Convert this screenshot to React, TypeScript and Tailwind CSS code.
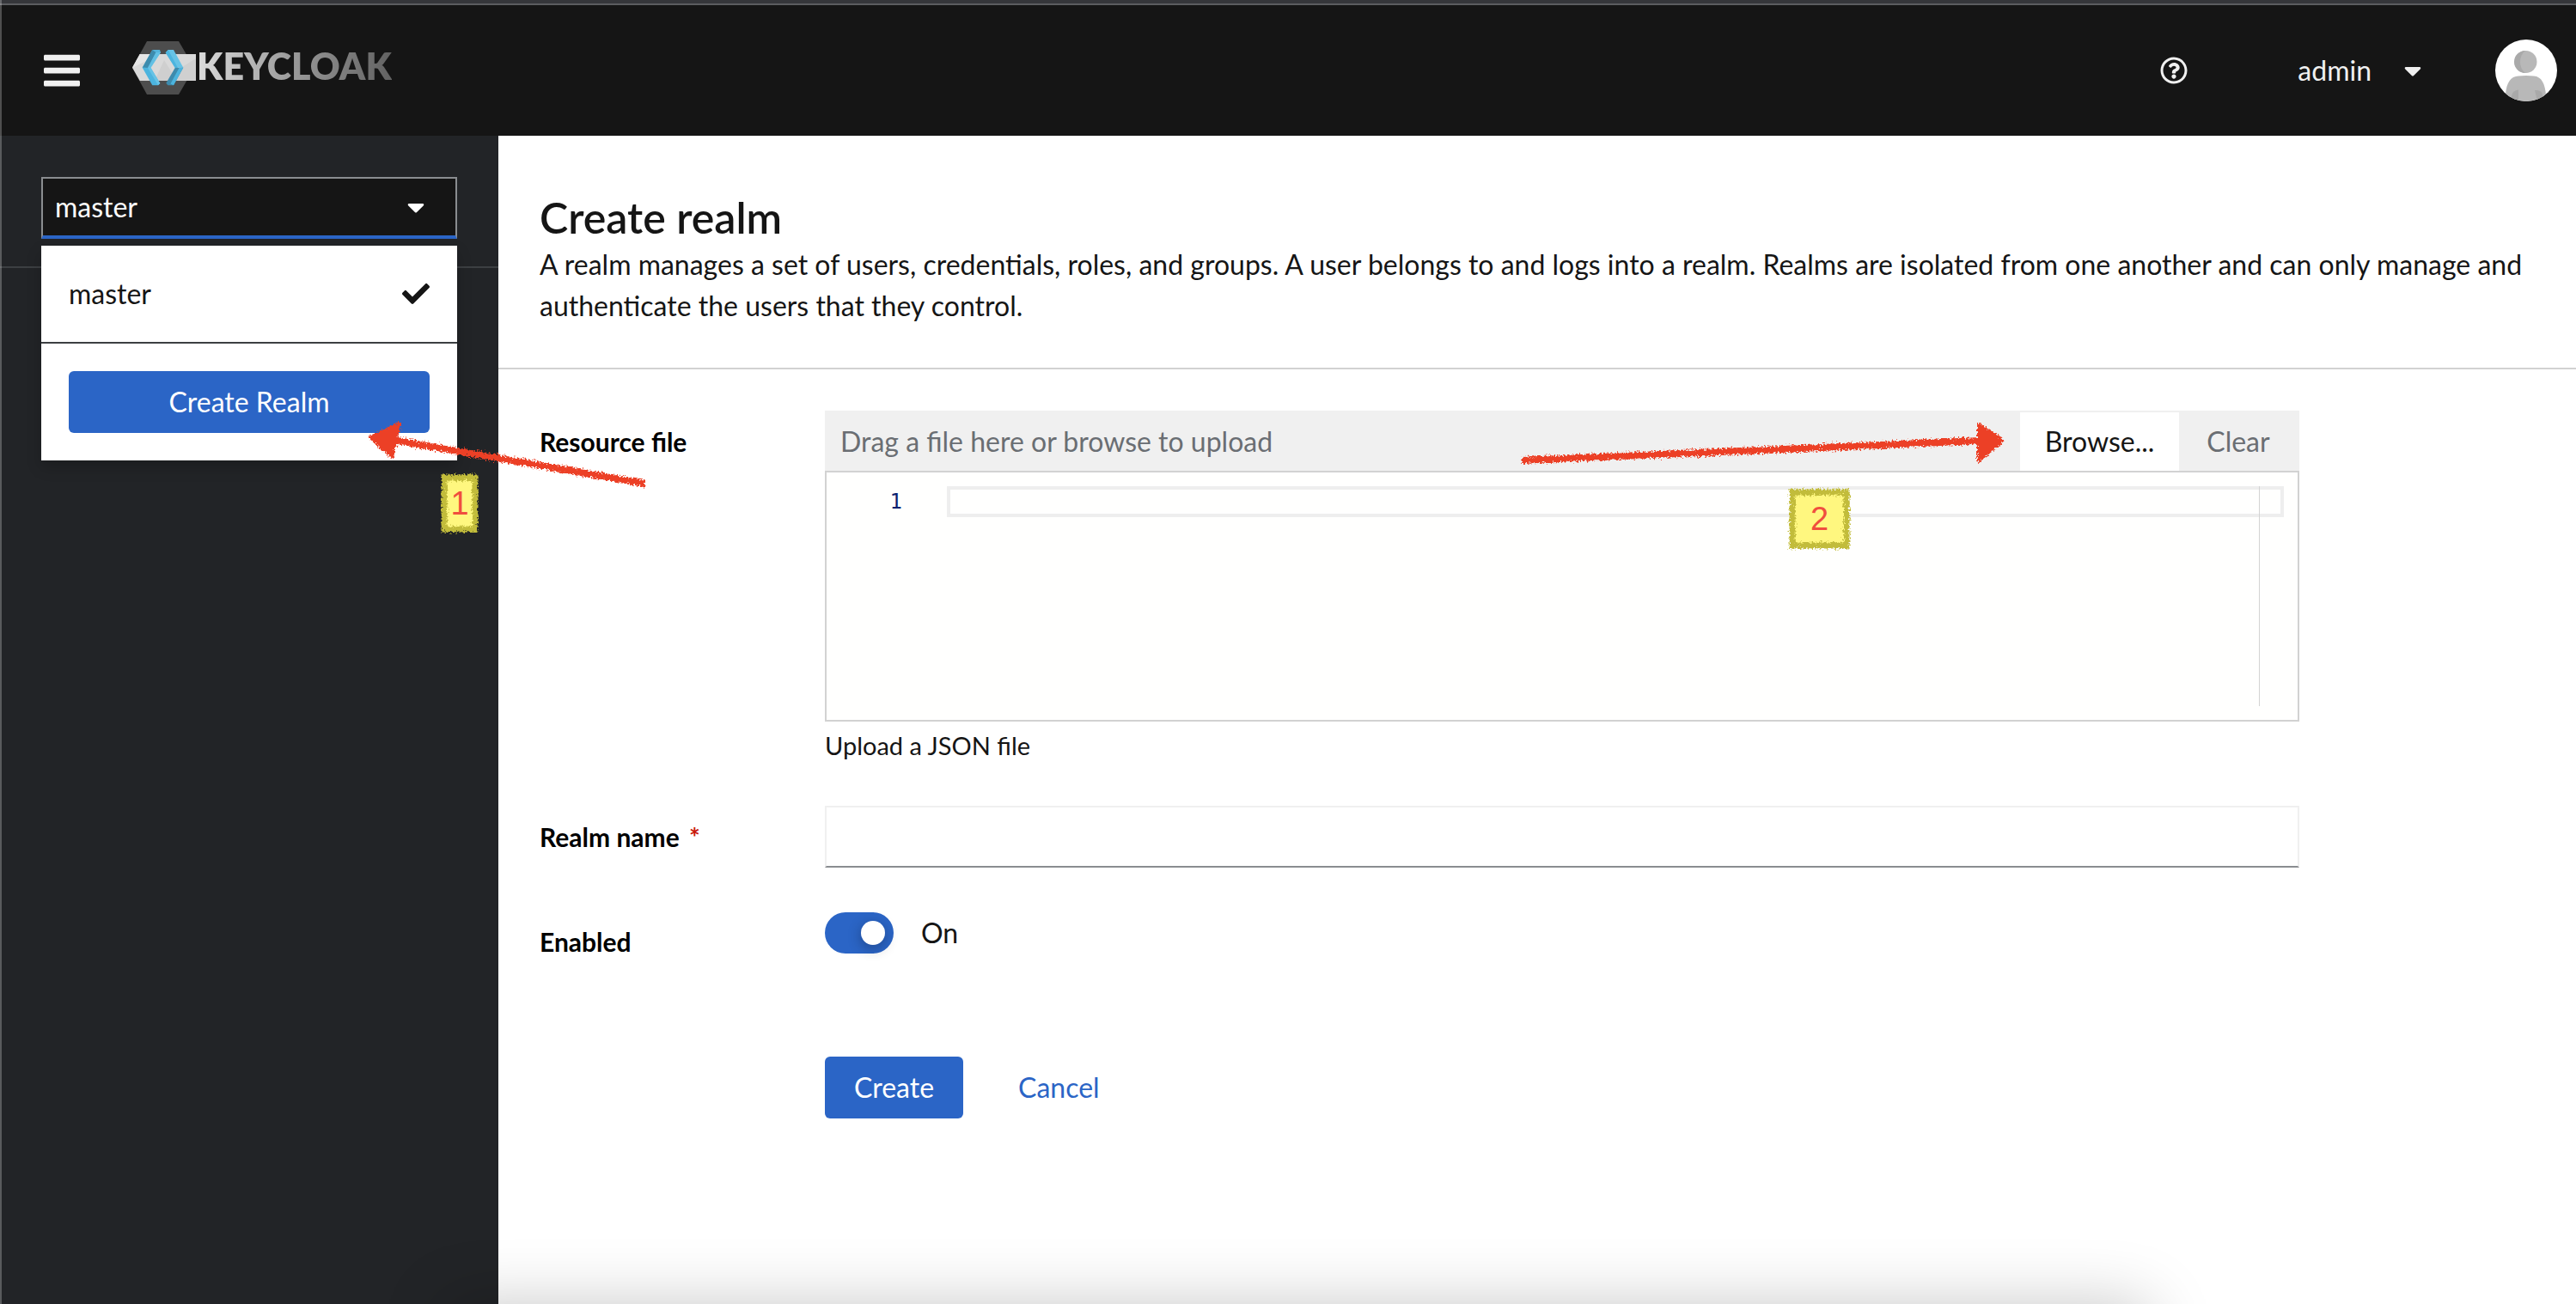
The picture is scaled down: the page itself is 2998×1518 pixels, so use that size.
import { FaBars, FaCaretDown, FaCheck, FaRegQuestionCircle } from "react-icons/fa";

function Logo() {
  return (
    <a href="#" aria-label="Keycloak" className="mb-1.5 ml-[58px] flex items-start gap-px">
      <svg width="74" height="62" viewBox="0 0 74 62" aria-hidden="true">
        <path d="M17 0H54L72 31L54 62H17L0 31Z" fill="#4d4d4d" />
        <path d="M8.7 15H74V46H8.7L0 30.7Z" fill="#d9d9d9" />
        <path d="M8.7 15H30L14 24L0 30.7Z" fill="#e6e6e6" />
        <path d="M37 22L52 46H26Z" fill="#cfcfcf" />
        <path d="M58 30L74 20V46H50Z" fill="#d0d0d0" />
        <path d="M23.3 10H32L33 13L20.7 31L11.7 30.7Z" fill="#55b4dc" />
        <path d="M23.3 10L27.5 13L18 31L11.7 30.7Z" fill="#3d8bad" />
        <path d="M27.5 13L33 13L21.5 31H18Z" fill="#62c0e4" />
        <path d="M11.7 30.7L21.5 31L32.3 49L30 51.3H23.3Z" fill="#4cb4de" />
        <path d="M18 31H21.5L32.3 49L30 51.3Z" fill="#66c3e6" />
        <path d="M41.7 10H48L59.3 30.7H49.7L38.7 13.3Z" fill="#66c3e6" />
        <path d="M41.7 10L53 31H49.7L38.7 13.3Z" fill="#4cb4de" />
        <path d="M49.7 31L59.3 30.7L48 51.3H41.3L39.3 48.7Z" fill="#3d8bad" />
        <path d="M54.5 31L59.3 30.7L48 51.3L44.5 49.5Z" fill="#4cb4de" />
      </svg>
      <span className="bg-linear-to-r from-[#dcdcdc] via-[#999999] to-[#626262] bg-clip-text text-[43px] leading-[58px] font-extrabold text-transparent">
        KEYCLOAK
      </span>
    </a>
  );
}

function Avatar() {
  return (
    <svg width="72" height="72" viewBox="0 0 72 72" role="img" aria-label="Avatar">
      <defs>
        <clipPath id="avatar-clip">
          <circle cx="36" cy="36" r="36" />
        </clipPath>
      </defs>
      <g clipPath="url(#avatar-clip)">
        <rect width="72" height="72" fill="#fff" />
        <circle cx="35.5" cy="26" r="13" fill="#b8b8b8" />
        <path d="M35 13A13 13 0 0 0 35 39C27 33 27 19 35 13Z" fill="#a9a9a9" />
        <path d="M12 72V64C13 50 18 43 27 42.5Q36 41.5 45 42.5C54 43 58 52 59 64V72Z" fill="#b8b8b8" />
        <path d="M19 72V66Q20 59 27 58.500V72Z" fill="#a9a9a9" />
        <path d="M49 72L46 59Q52 58.500 54.500 62L56 72Z" fill="#a9a9a9" />
      </g>
    </svg>
  );
}

function ChalkFilter() {
  return (
    <svg className="absolute size-0" aria-hidden="true">
      <filter id="chalk" x="-10%" y="-30%" width="120%" height="160%">
        <feTurbulence type="fractalNoise" baseFrequency="0.45" numOctaves="3" seed="4" result="noise" />
        <feDisplacementMap in="SourceGraphic" in2="noise" scale="8" xChannelSelector="R" yChannelSelector="G" />
      </filter>
    </svg>
  );
}

function NumberBadge({ value, className, width, height }: { value: string; className: string; width: number; height: number }) {
  return (
    <div className={className}>
      <svg className="absolute inset-0 size-full overflow-visible" aria-hidden="true">
        <rect x="4" y="4" width={width - 8} height={height - 8} fill="#fff77f" />
        <rect x="4" y="4" width={width - 8} height={height - 8} fill="none" stroke="#c2bc3a" strokeWidth="7" filter="url(#chalk)" />
      </svg>
      <span className="relative font-['Liberation_Sans',sans-serif] text-[38px] leading-none text-[#f04e3e]">{value}</span>
    </div>
  );
}

function Header() {
  return (
    <header className="flex h-[154px] items-center border-t-2 border-[#5c5d60] bg-[#151515] pr-[22px] pl-12 text-[#f0f0f0]">
      <button type="button" aria-label="Global navigation">
        <FaBars size={48} />
      </button>
      <Logo />
      <button type="button" aria-label="Help" className="ml-auto">
        <FaRegQuestionCircle size={32} />
      </button>
      <button type="button" className="ml-32 flex items-center gap-8 text-[32px] leading-[48px]">
        admin
        <FaCaretDown size={32} />
      </button>
      <span className="ml-20">
        <Avatar />
      </span>
    </header>
  );
}

function Sidebar() {
  return (
    <aside className="relative z-10 w-[580px] shrink-0 bg-[#222427] text-[32px] leading-[48px]">
      <div className="border-b-2 border-[#3c3f42] px-12 pt-12 pb-8">
        <div className="relative">
          <button
            type="button"
            aria-haspopup="true"
            aria-expanded="true"
            className="flex h-[72px] w-full items-center justify-between border-2 border-b-4 border-[#8a8d90] border-b-[#2b65c6] bg-[#151515] pr-[30px] pl-[14px] text-white"
          >
            master
            <FaCaretDown size={32} />
          </button>
          <div className="absolute inset-x-0 top-20 bg-white text-[#151515] shadow-[0_8px_16px_rgba(3,3,3,0.2)]">
            <button type="button" className="flex h-28 w-full items-center justify-between px-8">
              master
              <FaCheck size={32} />
            </button>
            <div className="border-t-2 border-[#3c3f42] p-8">
              <button type="button" className="h-[72px] w-full rounded-md bg-[#2b65c6] text-white">
                Create Realm
              </button>
            </div>
          </div>
        </div>
      </div>
      <svg className="absolute top-[323px] left-[418px] overflow-visible" width="340" height="90" aria-hidden="true">
        <g filter="url(#chalk)" fill="#ec4127" stroke="#ec4127" strokeLinejoin="round">
          <path d="M38 31L333 82" strokeWidth="8" />
          <path d="M13 28L47 12L38 51Z" strokeWidth="4" />
        </g>
      </svg>
      <NumberBadge value="1" width={44} height={68} className="absolute top-[394px] left-[513px] flex h-[68px] w-11 items-center justify-center" />
    </aside>
  );
}

const labelClass = "pt-4 text-[30px] leading-10 font-bold text-black";

function ResourceFile() {
  return (
    <div className="relative">
      <div className="flex h-[70px] border-t-2 border-r-2 border-[#f0f0f0] bg-[#f0f0f0] text-[32px] leading-[48px]">
        <input
          id="resource-file"
          readOnly
          placeholder="Drag a file here or browse to upload"
          className="min-w-0 flex-1 pl-[18px] outline-none placeholder:text-[#6a6e73]"
        />
        <button type="button" className="w-[185px] bg-white text-[#151515]">
          Browse...
        </button>
        <button type="button" className="w-[138px] text-[#6a6e73]">
          Clear
        </button>
      </div>
      <div className="relative flex h-[292px] border-2 border-[#d2d2d2] bg-[#fffffe] p-4">
        <span className="w-[124px] pr-[52px] text-right font-['DejaVu_Sans_Mono',monospace] text-2xl leading-9 text-[#0b216f]">1</span>
        <textarea
          aria-label="Resource file contents"
          rows={1}
          className="h-9 flex-1 resize-none overflow-hidden border-4 border-[#eeeeee] font-['DejaVu_Sans_Mono',monospace] text-2xl leading-7 outline-none"
        />
        <div className="absolute top-4 right-11 bottom-4 w-px bg-[#d3d3d3]" />
      </div>
      <svg className="absolute top-2 right-[336px] overflow-visible" width="580" height="65" aria-hidden="true">
        <g filter="url(#chalk)" fill="#ec4127" stroke="#ec4127" strokeLinejoin="round">
          <path d="M11 50L545 27" strokeWidth="8" />
          <path d="M570 27L543 8V50Z" strokeWidth="4" />
        </g>
      </svg>
      <NumberBadge value="2" width={71} height={70} className="absolute top-[91px] right-[523px] flex h-[70px] w-[71px] items-center justify-center" />
      <p className="mt-2 text-[29px] leading-10">Upload a JSON file</p>
    </div>
  );
}

function RealmForm() {
  return (
    <form className="flex max-w-[2144px] flex-col gap-[50px] px-12 pt-12 pb-24 text-[#151515]">
      <div className="grid grid-cols-[332px_1fr]">
        <label htmlFor="resource-file" className={labelClass}>
          Resource file
        </label>
        <ResourceFile />
      </div>
      <div className="grid grid-cols-[332px_1fr]">
        <label htmlFor="realm-name" className={labelClass}>
          Realm name <span className="ml-1 text-[#c9190b]">*</span>
        </label>
        <input
          id="realm-name"
          type="text"
          required
          className="h-[72px] w-full border-2 border-[#f0f0f0] border-b-[#8a8d90] px-4 text-[32px] shadow-none outline-none"
        />
      </div>
      <div className="grid grid-cols-[332px_1fr]">
        <label htmlFor="enabled" className={labelClass}>
          Enabled
        </label>
        <div className="flex items-center gap-8 self-start pt-0.5 text-[32px] leading-[48px]">
          <input
            id="enabled"
            type="checkbox"
            role="switch"
            defaultChecked
            className="flex h-12 w-20 appearance-none items-center justify-end rounded-full bg-[#2b65c6] pr-2.5 before:block before:size-7 before:rounded-full before:bg-white before:shadow-[0_4px_16px_rgba(3,3,3,0.3)]"
          />
          <span>On</span>
        </div>
      </div>
      <div className="mt-16 flex gap-8 pl-[332px] text-[32px] leading-[48px]">
        <button type="submit" className="h-[72px] min-w-[161px] rounded-md bg-[#2b65c6] px-8 text-white">
          Create
        </button>
        <button type="button" className="h-[72px] px-8 text-[#2b65c6]">
          Cancel
        </button>
      </div>
    </form>
  );
}

export default function App() {
  return (
    <div className="relative flex min-h-screen flex-col overflow-hidden bg-white font-['Lato',sans-serif]">
      <ChalkFilter />
      <div className="h-1 bg-[#35363a]" />
      <Header />
      <div className="flex flex-1">
        <Sidebar />
        <main className="min-w-0 flex-1 bg-white text-[#151515]">
          <section className="border-b-2 border-[#d2d2d2] px-12 pt-16 pb-12">
            <h1 className="text-[50px] leading-[62px] font-semibold">Create realm</h1>
            <p className="text-[32px] leading-[48px]">
              A realm manages a set of users, credentials, roles, and groups. A user belongs to and logs into a realm. Realms are isolated from one
              another and can only manage and authenticate the users that they control.
            </p>
          </section>
          <RealmForm />
        </main>
      </div>
      <div className="pointer-events-none absolute inset-y-0 left-0 z-20 w-0.5 bg-white/25" />
      <div className="pointer-events-none absolute top-full right-[498px] left-[520px] z-20 h-48 shadow-[0_0_76px_rgba(0,0,0,0.22)]" />
    </div>
  );
}
